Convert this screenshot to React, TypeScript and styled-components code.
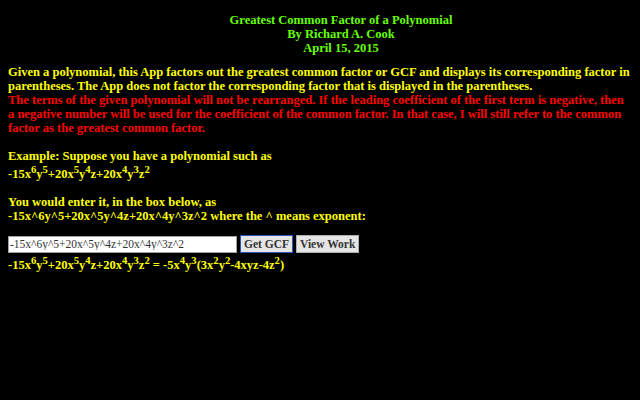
import React from "react";
import styled, { createGlobalStyle } from "styled-components";

const Global = createGlobalStyle`
  html, body { background: #000; }
  body {
    margin: 8px;
    font-family: "Liberation Serif", "Times New Roman", serif;
    font-size: 12.5px;
    line-height: 14px;
    font-weight: bold;
  }
`;

const Title = styled.div`
  margin: 5px 0 10px;
  padding-left: 42px;
  text-align: center;
  color: #66ff00;
`;

const Para = styled.div<{ $gap?: number }>`
  color: #ffff00;
  margin-bottom: ${(p) => (p.$gap ?? 14)}px;
`;

const Red = styled.span`
  color: #ff0000;
`;

const Sup = styled.sup`
  font-size: 0.85em;
  vertical-align: super;
`;

const FormRow = styled.div`
  display: flex;
  align-items: center;
  gap: 3px;
  height: 18px;
`;

const Input = styled.input`
  box-sizing: border-box;
  width: 229px;
  height: 17px;
  margin: 0;
  padding: 0 1px;
  border: 1px solid #a0a0a0;
  background: #fff;
  color: #333;
  font-family: "Liberation Serif", "Times New Roman", serif;
  font-size: 11.5px;
  font-weight: normal;
  outline: none;
`;

const Button = styled.button<{ $primary?: boolean }>`
  box-sizing: border-box;
  height: 18px;
  margin: 0;
  padding: 0 3px;
  border: 1px solid ${(p) => (p.$primary ? "#2b55b8" : "#adadad")};
  background: #e5e5e5;
  color: #333;
  font-family: "Liberation Serif", "Times New Roman", serif;
  font-size: 11.5px;
  font-weight: bold;
  line-height: 14px;
  cursor: pointer;
`;

const Result = styled.div`
  color: #ffff00;
  margin-top: 1px;
`;

const Poly = () => (
  <>
    -15x<Sup>6</Sup>y<Sup>5</Sup>+20x<Sup>5</Sup>y<Sup>4</Sup>z+20x<Sup>4</Sup>y<Sup>3</Sup>z<Sup>2</Sup>
  </>
);

export default function App() {
  return (
    <>
      <Global />
      <Title>
        Greatest Common Factor of a Polynomial
        <br />
        By Richard A. Cook
        <br />
        April 15, 2015
      </Title>
      <Para>
        Given a polynomial, this App factors out the greatest common factor or GCF and displays its
        corresponding factor in parentheses. The App does not factor the corresponding factor that is
        displayed in the parentheses.
        <br />
        <Red>
          The terms of the given polynomial will not be rearranged. If the leading coefficient of the
          first term is negative, then a negative number will be used for the coefficient of the
          common factor. In that case, I will still refer to the common factor as the greatest common
          factor.
        </Red>
      </Para>
      <Para>
        Example: Suppose you have a polynomial such as
        <br />
        <Poly />
      </Para>
      <Para $gap={12}>
        You would enter it, in the box below, as
        <br />
        -15x^6y^5+20x^5y^4z+20x^4y^3z^2 where the ^ means exponent:
      </Para>
      <FormRow>
        <Input defaultValue="-15x^6y^5+20x^5y^4z+20x^4y^3z^2" />
        <Button $primary>Get GCF</Button>
        <Button>View Work</Button>
      </FormRow>
      <Result>
        <Poly /> = -5x<Sup>4</Sup>y<Sup>3</Sup>(3x<Sup>2</Sup>y<Sup>2</Sup>-4xyz-4z<Sup>2</Sup>)
      </Result>
    </>
  );
}
